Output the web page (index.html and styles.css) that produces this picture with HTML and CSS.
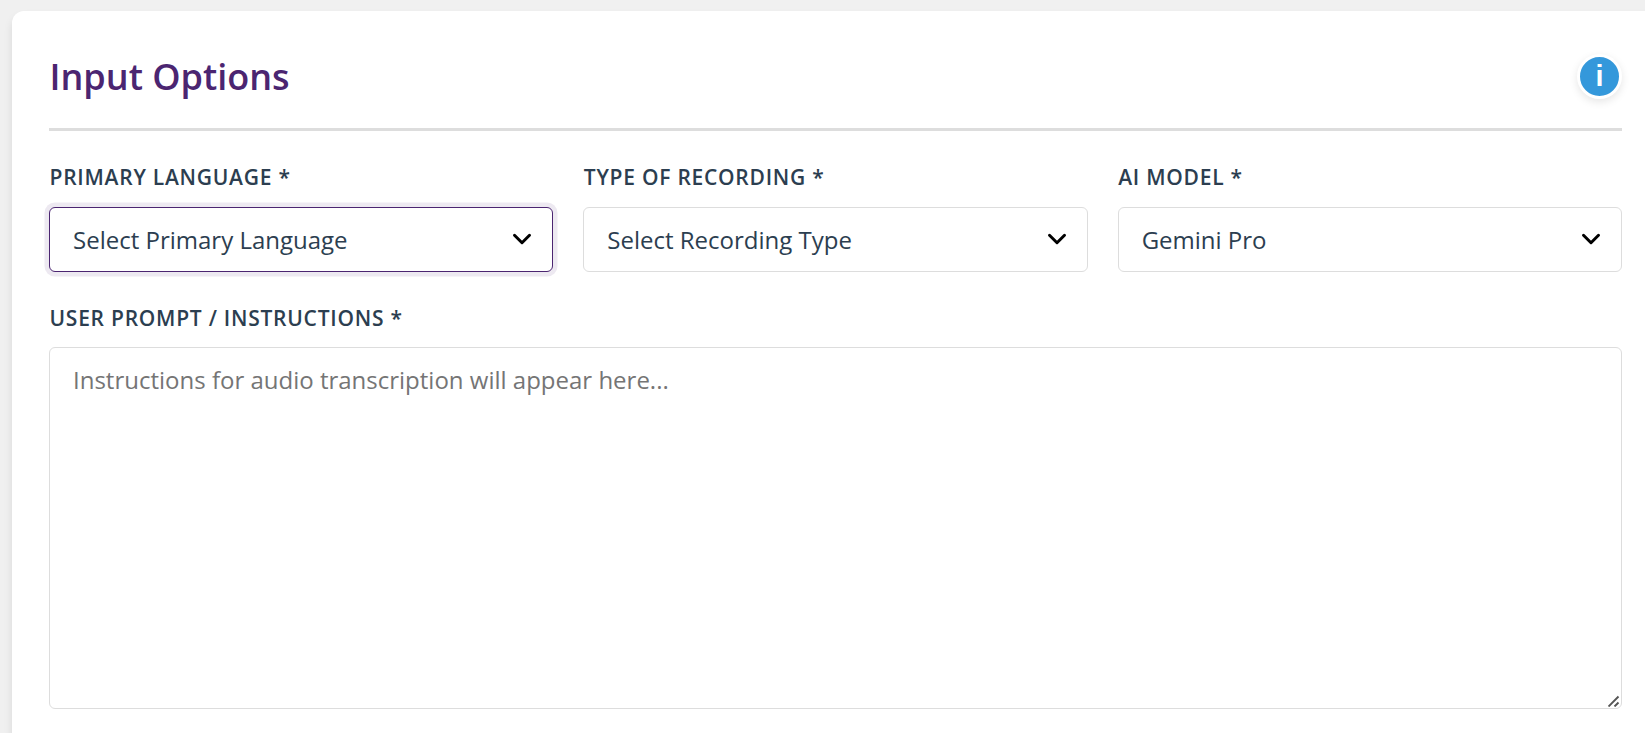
FILE: index.html
```
<!DOCTYPE html>
<html lang="en">
<head>
    <meta charset="UTF-8">
    <meta name="viewport" content="width=device-width, initial-scale=1.0">
    <title>Input Options</title>
    <link rel="stylesheet" href="styles.css">
</head>
<body>
    <section class="card">
        <div class="card-header">
            <h2>Input Options</h2>
            <button class="info-button" type="button" aria-label="Info">i</button>
        </div>

        <div class="form-row">
            <div class="form-group">
                <label for="language">Primary Language *</label>
                <select id="language" class="focused">
                    <option>Select Primary Language</option>
                </select>
            </div>
            <div class="form-group">
                <label for="recording-type">Type of Recording *</label>
                <select id="recording-type">
                    <option>Select Recording Type</option>
                </select>
            </div>
            <div class="form-group">
                <label for="model">AI Model *</label>
                <select id="model">
                    <option>Gemini Pro</option>
                </select>
            </div>
        </div>

        <div class="form-group">
            <label for="prompt">User Prompt / Instructions *</label>
            <div class="textarea-wrap">
                <textarea id="prompt" placeholder="Instructions for audio transcription will appear here..."></textarea>
                <svg class="grip" width="12" height="12" viewBox="0 0 12 12">
                    <path d="M0.5 11.5 L10.5 1.5 M6.5 11.5 L10.5 7.5" fill="none" stroke="#555" stroke-width="1.9"/>
                </svg>
            </div>
        </div>
    </section>
</body>
</html>
```
FILE: styles.css
```
* {
    box-sizing: border-box;
}

body {
    margin: 0;
    font-family: "Open Sans", sans-serif;
    background: #f0f0f0;
    color: #2c3e50;
    overflow: hidden;
}

.card {
    width: 1648px;
    height: 722px;
    margin: 11px 0 0 12px;
    padding: 37px 38px 0 37px;
    background: #fff;
    border-radius: 12px 12px 0 0;
    box-shadow: 0 6px 9px rgba(0, 0, 0, 0.1);
}

.card-header {
    display: flex;
    justify-content: space-between;
    align-items: center;
    height: 83px;
    margin-bottom: 29px;
    padding-bottom: 24px;
    border-bottom: 3px solid #ddd;
}

.card-header h2 {
    margin: 0;
    padding-left: 0.5px;
    font-size: 36px;
    font-weight: 600;
    color: #4b2571;
}

.info-button {
    width: 45px;
    height: 45px;
    padding: 0;
    font-family: "Liberation Sans", Arial, sans-serif;
    font-size: 28.8px;
    font-weight: bold;
    line-height: 37px;
    color: #fff;
    background: #3498db;
    border: 3px solid #fff;
    border-radius: 50%;
    box-shadow: 0 3px 8px rgba(0, 0, 0, 0.1);
    cursor: pointer;
}

.form-row {
    display: grid;
    grid-template-columns: repeat(3, 1fr);
    gap: 30px;
    margin-bottom: 29px;
}

label {
    display: block;
    padding-left: 0.5px;
    margin-bottom: 13px;
    font-size: 21px;
    font-weight: 600;
    line-height: 34px;
    letter-spacing: 0.75px;
    text-transform: uppercase;
}

.textarea-wrap {
    position: relative;
    margin-top: -1px;
}

select,
textarea {
    display: block;
    width: 100%;
    font-family: inherit;
    font-size: 24px;
    color: #2c3e50;
    background: #fff;
    border: 1px solid #ddd;
    border-radius: 6px;
    outline: none;
}

select {
    height: 65px;
    padding: 0 60px 0 23px;
    appearance: none;
    background-image: url("data:image/svg+xml,%3Csvg xmlns='http://www.w3.org/2000/svg' viewBox='0 0 24 24' fill='none' stroke='black' stroke-width='2.4' stroke-linecap='round' stroke-linejoin='round'%3E%3Cpolyline points='6 9 12 15 18 9'/%3E%3C/svg%3E");
    background-repeat: no-repeat;
    background-position: right 15px top 16px;
    background-size: 30px;
}

select.focused {
    border-color: #4b2571;
    box-shadow: 0 0 0 4.5px rgba(75, 37, 113, 0.1);
}

textarea {
    height: 362px;
    padding: 14px 23px;
    line-height: 36px;
    resize: none;
}

textarea::placeholder {
    color: #757575;
}

.grip {
    position: absolute;
    right: 2px;
    bottom: 2px;
}
```
